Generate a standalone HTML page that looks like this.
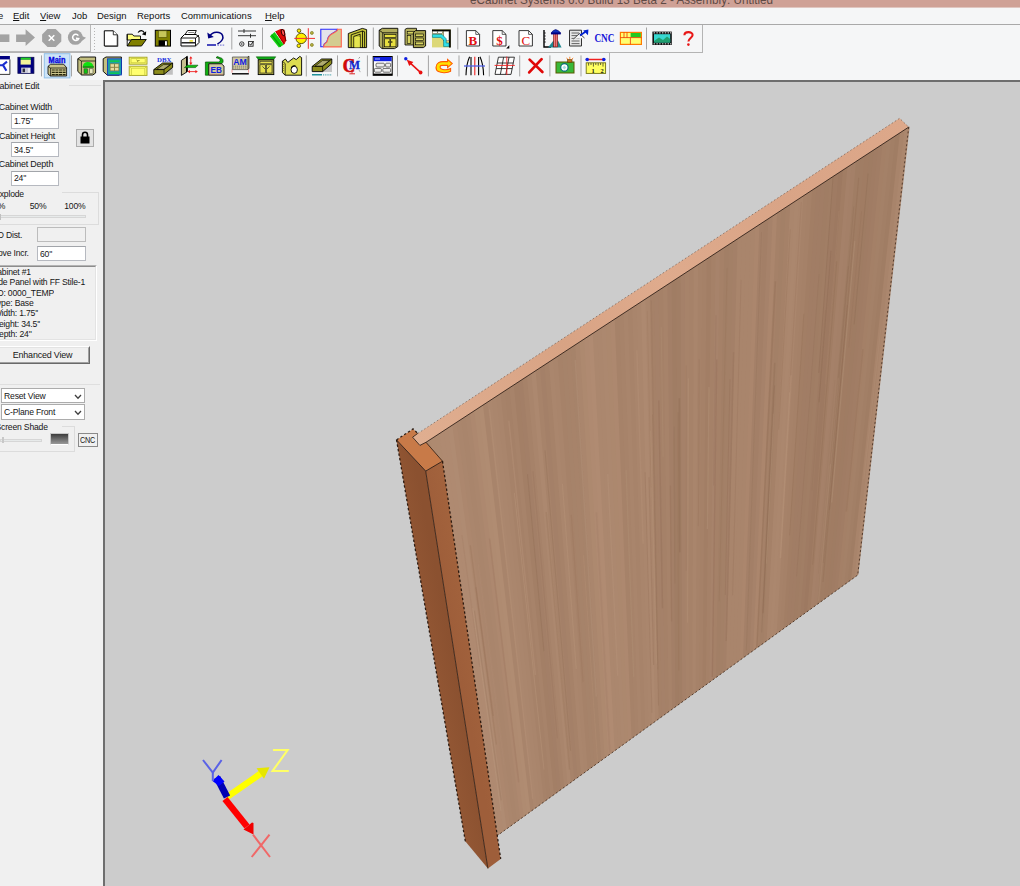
<!DOCTYPE html>
<html>
<head>
<meta charset="utf-8">
<title>eCabinet Systems</title>
<style>
html,body{margin:0;padding:0;}
body{width:1020px;height:886px;overflow:hidden;background:#f0f0f0;font-family:"Liberation Sans",sans-serif;font-size:11px;color:#000;position:relative;}
.abs{position:absolute;}
#title{left:0;top:0;width:1020px;height:8px;background:linear-gradient(#cfa196 0,#cfa196 7px,#e0c6c0 7px,#e0c6c0 8px);overflow:hidden;}
#title span{position:absolute;left:470px;top:-6.2px;font-size:12.5px;line-height:12px;color:#5e4a45;white-space:nowrap;transform:scaleX(0.934);transform-origin:left center;}
#menubar{left:0;top:8px;width:1020px;height:16px;background:#f5f6f7;border-bottom:1px solid #a9a9a9;}
#menubar span{position:absolute;top:1.7px;font-size:9.3px;line-height:12px;color:#111;white-space:nowrap;transform:scaleX(1.02);transform-origin:left center;}
#menubar u{text-decoration:underline;}
#tb{left:0;top:25px;width:1020px;height:55px;background:#f5f6f7;}
#tb1line{left:0;top:52px;width:703px;height:1px;background:#b4b4b4;}
#tb1end{left:702px;top:25px;width:1px;height:28px;background:#b4b4b4;}
#tb2end{left:609px;top:53px;width:1px;height:27px;background:#b4b4b4;}
.sep{position:absolute;width:1px;background:#9d9d9d;}
#left{left:0;top:80px;width:103px;height:806px;background:#f0f0f0;}
#view{left:103px;top:80px;width:917px;height:806px;background:#cccccc;border-left:2px solid #6e6e6e;border-top:2px solid #6e6e6e;box-sizing:border-box;}
#scene{left:0;top:0;width:1020px;height:886px;}
.lbl{position:absolute;font-size:10.5px;white-space:nowrap;color:#000;letter-spacing:-0.2px;}
.inp{position:absolute;background:#fff;border:1px solid #abadb3;box-sizing:border-box;font-size:10.5px;line-height:13px;padding-left:2px;white-space:nowrap;}
</style>
</head>
<body>
<div id="title" class="abs"><span>eCabinet Systems 6.0 Build 13 Beta 2 - Assembly: Untitled</span></div>
<div id="menubar" class="abs">
<span style="left:-2px">e</span>
<span style="left:13px"><u>E</u>dit</span>
<span style="left:40px"><u>V</u>iew</span>
<span style="left:72px">Job</span>
<span style="left:97px">Design</span>
<span style="left:137px">Reports</span>
<span style="left:181px">Communications</span>
<span style="left:265px"><u>H</u>elp</span>
</div>
<div id="tb" class="abs"></div>
<div id="tb1line" class="abs"></div>
<div id="tb1end" class="abs"></div>
<div id="tb2end" class="abs"></div>
<svg class="abs" style="left:0;top:0" width="1020" height="82" viewBox="0 0 1020 82">
<!-- toolbar1 left gray nav section -->
<rect x="0" y="25" width="91" height="27" fill="#f0f0f0"/>
<rect x="0" y="51" width="91" height="1" fill="#b9b9b9"/>
<rect x="90" y="25" width="1" height="27" fill="#b9b9b9"/>
<g fill="#a3a3a3">
<rect x="0" y="34.4" width="9.4" height="7.6"/>
<polygon points="16.1,34.4 25.6,34.4 25.6,29.2 35,37.6 25.6,46 25.6,42 16.1,42"/>
<polygon points="47.5,29 55.7,29 61.3,34.4 61.3,41.6 55.7,47 47.5,47 42.1,41.6 42.1,34.4"/>
<circle cx="75.3" cy="37.4" r="7.4"/>
<polygon points="80.5,35.6 86,37.8 80,42.5"/>
</g>
<g stroke="#fff" stroke-width="1.5" fill="none">
<path d="M48.7 35.2 L54.3 40.8 M54.3 35.2 L48.7 40.8"/>
<path d="M78.3 35.6 A3.1 3.1 0 1 0 78.6 38.6 L76 38.4" stroke-width="1.6"/>
</g>
<!-- grip -->
<g fill="#b5b5b5"><rect x="94" y="28" width="1" height="1"/><rect x="94" y="31" width="1" height="1"/><rect x="94" y="34" width="1" height="1"/><rect x="94" y="37" width="1" height="1"/><rect x="94" y="40" width="1" height="1"/><rect x="94" y="43" width="1" height="1"/><rect x="94" y="46" width="1" height="1"/><rect x="94" y="49" width="1" height="1"/></g>
<!-- new doc -->
<path d="M104.3 30.8 H113.3 L117.3 34.8 V46 H104.3 Z" fill="#fff" stroke="#000" stroke-width="1"/>
<path d="M113.3 30.8 V34.8 H117.3" fill="#fff" stroke="#000" stroke-width="0.8"/>
<path d="M117.8 35.5 V46.5 H105" fill="none" stroke="#444" stroke-width="0.9"/>
<!-- open folder -->
<path d="M127.2 34.2 H132.3 L133.8 36 H140.5 V40 H127.2 Z" fill="#ffff80" stroke="#000" stroke-width="0.9"/>
<path d="M127.2 46 L131.5 39.5 H146.3 L141.5 46 Z" fill="#808000" stroke="#000" stroke-width="0.9"/>
<path d="M127.2 34.2 V46" stroke="#000" stroke-width="0.9"/>
<path d="M138 32.5 C140 30 143 30 144.3 32.8" fill="none" stroke="#000" stroke-width="1.1"/>
<polygon points="146.2,31.2 145.8,35.5 141.8,34.2" fill="#000"/>
<!-- floppy -->
<rect x="155.3" y="30.3" width="15.2" height="15.8" fill="#808000" stroke="#000" stroke-width="1"/>
<rect x="158.3" y="30.8" width="8.6" height="6.6" fill="#c6c65a"/>
<rect x="158.3" y="30.8" width="8.6" height="6.6" fill="none" stroke="#4b4b00" stroke-width="0.6"/>
<rect x="158.6" y="40.3" width="9" height="5.6" fill="#000"/>
<rect x="165" y="41.2" width="1.9" height="4.2" fill="#fff"/>
<!-- printer -->
<path d="M185 34.5 L187.7 30.5 H196.3 L194.6 34.5 Z" fill="#fff" stroke="#000" stroke-width="0.9"/>
<path d="M188.3 32.5 H194.3" stroke="#555" stroke-width="0.7"/>
<path d="M181 38 L184.5 34.5 H196 L199 37 V42.5 L195.5 46 H181 Z" fill="#fff" stroke="#000" stroke-width="1"/>
<path d="M181 38 H195.5 L199 35.2 M195.5 38 V46" fill="none" stroke="#000" stroke-width="0.9"/>
<path d="M181.5 42.8 H195" stroke="#000" stroke-width="1.3"/>
<rect x="189.5" y="40.3" width="3.4" height="1.3" fill="#e6d800"/>
<path d="M181.8 46.6 H195.5 L199.3 43" fill="none" stroke="#777" stroke-width="0.8"/>
<!-- undo -->
<path d="M209.8 36.2 C212.5 31.2 220.6 31 222.6 35.6 C223.8 38.6 221 42 217.4 44.2" fill="none" stroke="#000080" stroke-width="1.5"/>
<polygon points="207.3,32.6 208.2,38.6 213.8,37" fill="#000080"/>
<rect x="207" y="44.2" width="9" height="1.6" fill="#2020b0"/>
<rect x="217.4" y="44.6" width="1.6" height="1" fill="#6a6ad0"/><rect x="220" y="44.6" width="1.6" height="1" fill="#6a6ad0"/><rect x="222.6" y="44.6" width="1.6" height="1" fill="#6a6ad0"/>
<!-- sep -->
<rect x="231.3" y="27.5" width="1" height="22" fill="#a5a5a5"/>
<!-- sliders/options -->
<g stroke="#222" stroke-width="0.9" fill="none">
<path d="M238 31 H256 M244 29 V33"/>
<path d="M238 35.7 H256 M250.5 33.8 V37.8"/>
<circle cx="241.8" cy="44" r="2.2"/>
<rect x="248.5" y="41.6" width="4.6" height="4.6"/>
<path d="M249.3 43.6 L250.6 45.2 L253.6 41.2" stroke-width="1"/>
</g>
<circle cx="241.8" cy="44" r="0.8" fill="#222"/>
<rect x="262" y="27.5" width="1" height="22" fill="#a5a5a5"/>
<!-- red/green books -->
<polygon points="275.6,31.2 280.5,29 284.6,29.8 286.2,40.8 283.8,45 " fill="#e00808"/>
<polygon points="269.9,36.2 274.6,32 283.8,44.8 278.9,47.4" fill="#10d010"/>
<path d="M271.6 34.6 L280.8 46.6" stroke="#08a008" stroke-width="1.2"/>
<path d="M275.6 31.4 L284.4 43.8" stroke="#a00000" stroke-width="1"/>
<ellipse cx="283" cy="32.6" rx="1.5" ry="3.2" transform="rotate(-18 283 32.6)" fill="#ff5050" stroke="#300000" stroke-width="1"/>
<path d="M284.6 35.6 L286 41" stroke="#600000" stroke-width="0.9"/>
<!-- yellow circle crosshair -->
<circle cx="301.2" cy="38.4" r="5.2" fill="#ffee00" stroke="#4a4400" stroke-width="0.9"/>
<circle cx="299" cy="30.7" r="1.8" fill="#ffee00" stroke="#4a4400" stroke-width="0.8"/>
<circle cx="298.8" cy="45.8" r="1.8" fill="#ffee00" stroke="#4a4400" stroke-width="0.8"/>
<path d="M294.3 38.4 H315 M308.3 28.2 V48.8" stroke="#f03030" stroke-width="1"/>
<circle cx="311.9" cy="32.9" r="1.5" fill="#b8b040" stroke="#707010" stroke-width="0.6"/>
<circle cx="311.9" cy="44.9" r="1.5" fill="#b8b040" stroke="#707010" stroke-width="0.6"/>
<!-- profile -->
<path d="M320.8 29.2 H337.2 V30.2 C335.6 31.6 334.4 32.4 333.4 32.8 L330.4 34.6 C329.2 35.6 328.4 36.6 328 37.8 L326.8 41.8 L324.2 44 L323.4 46.8 H320.8 Z" fill="#e4e4ea" stroke="#2828ff" stroke-width="1.1"/>
<path d="M337.4 29.2 H341.3 V46.9 H323.6 L324.4 44.2 L327 42 L328.2 38 C328.6 36.8 329.4 35.8 330.6 34.8 L333.6 33 C334.6 32.6 335.8 31.8 337.4 30.4 Z" fill="#d4cc90" stroke="#ff6450" stroke-width="1.1"/>
<!-- door frame -->
<path d="M348.3 33.5 L362.3 28.4 L366.6 29.6 V47.6 H348.3 Z" fill="#c8c83c" stroke="#000" stroke-width="0.9"/>
<path d="M351.2 47.6 V34.8 L362.5 31 V47.6 M353.8 47.6 V36.4 L360.2 34.2 V47.6 M362.5 31 L364.6 31.8 V47.6" fill="none" stroke="#000" stroke-width="0.8"/>
<rect x="354.4" y="37" width="5.4" height="10.4" fill="#e6e650"/>
<rect x="372.8" y="27.5" width="1" height="22" fill="#a5a5a5"/>
<!-- cabinet 1 -->
<path d="M379.2 30.2 L382.4 28.3 H397.8 V46.6 L394.6 48.6 H382 L379.2 46 Z" fill="#b0ac5c" stroke="#000" stroke-width="0.9"/>
<path d="M379.2 30.2 L382.8 32.8 H397.8 M382.8 32.8 V48.4" fill="none" stroke="#000" stroke-width="0.8"/>
<rect x="384.6" y="34.6" width="11.4" height="3" fill="#e8e040" stroke="#000" stroke-width="0.6"/>
<rect x="384.6" y="38.8" width="5.3" height="8" fill="#e8e040" stroke="#000" stroke-width="0.6"/>
<rect x="390.7" y="38.8" width="5.3" height="8" fill="#e8e040" stroke="#000" stroke-width="0.6"/>
<path d="M388.8 41 V43 M391.8 41 V43" stroke="#000" stroke-width="0.8"/>
<!-- cabinet 2 -->
<path d="M405 29.4 L407 28.3 H416.5 V45 H405 Z" fill="#b4b060" stroke="#000" stroke-width="0.8"/>
<rect x="407.2" y="31.4" width="7" height="2.6" fill="#d8d460" stroke="#000" stroke-width="0.6"/>
<rect x="407.2" y="35.4" width="3.6" height="8" fill="#d8d460" stroke="#000" stroke-width="0.6"/>
<path d="M413.4 32.6 L415.6 30.6 H425.6 V46 L423.4 47.6 H413.4 Z" fill="#a8a450" stroke="#000" stroke-width="0.9"/>
<rect x="415.6" y="34" width="8" height="2.6" fill="#d8d460" stroke="#000" stroke-width="0.6"/>
<rect x="415.6" y="38" width="8" height="2.6" fill="#d8d460" stroke="#000" stroke-width="0.6"/>
<rect x="415.6" y="42" width="8" height="2.8" fill="#d8d460" stroke="#000" stroke-width="0.6"/>
<!-- countertop -->
<rect x="432" y="29.4" width="18.8" height="18" fill="#dcd878"/>
<path d="M432 29.4 H450.8 V47.4 H449 V31.2 H432 Z" fill="#000"/>
<rect x="432.6" y="31.2" width="4.6" height="2.4" fill="#fff" stroke="#444" stroke-width="0.5"/>
<rect x="437.8" y="31.2" width="4.6" height="2.4" fill="#fff" stroke="#444" stroke-width="0.5"/>
<rect x="443.6" y="31.2" width="5.4" height="9.6" fill="#fff" stroke="#444" stroke-width="0.5"/>
<path d="M432.4 34.4 H442 L446.2 38.8 V43 H449 V46.6 H443.6 V40 L440.6 37.4 H432.4 Z" fill="#30e0e8" stroke="#007080" stroke-width="0.6"/>
<rect x="457.3" y="27.5" width="1" height="22" fill="#a5a5a5"/>
<!-- doc B -->
<path d="M466.4 30.6 H475.8 L479.6 34.4 V46 H466.4 Z" fill="#fff" stroke="#222" stroke-width="0.9"/>
<path d="M475.8 30.6 V34.4 H479.6" fill="none" stroke="#222" stroke-width="0.7"/>
<text x="472.9" y="44.6" font-family="Liberation Serif" font-weight="bold" font-size="13" fill="#e01010" text-anchor="middle">B</text>
<!-- doc $ -->
<path d="M492.8 30.6 H502.2 L506 34.4 V46 H492.8 Z" fill="#fff" stroke="#222" stroke-width="0.9"/>
<path d="M502.2 30.6 V34.4 H506" fill="none" stroke="#222" stroke-width="0.7"/>
<text x="499.4" y="44.6" font-family="Liberation Serif" font-weight="bold" font-size="13" fill="#e01010" text-anchor="middle">$</text>
<polygon points="509.3,45.2 509.3,48.4 506.2,48.4" fill="#000"/>
<!-- doc C -->
<path d="M519 30.6 H528.6 L532.4 34.4 V46 H519 Z" fill="#fff" stroke="#222" stroke-width="0.9"/>
<path d="M528.6 30.6 V34.4 H532.4" fill="none" stroke="#222" stroke-width="0.7"/>
<text x="525.8" y="44.6" font-family="Liberation Serif" font-size="13" fill="#e01010" text-anchor="middle">C</text>
<!-- ruler/column -->
<path d="M544 30 V47 H551" fill="none" stroke="#000" stroke-width="1.4"/>
<path d="M544 33 H546 M544 36 H546 M544 39 H546 M544 42 H546" stroke="#000" stroke-width="0.6"/>
<polygon points="548,47.6 553.5,40.5 558,40.5 561.6,47.6" fill="#208890"/>
<rect x="553.6" y="33.5" width="4" height="13.4" fill="#e88080" stroke="#800000" stroke-width="0.6"/>
<path d="M555.6 33.5 V47" stroke="#b02020" stroke-width="0.7"/>
<path d="M551.2 33.2 C552 31 554 30.2 555.6 29.6 C557.4 30.2 559.6 31 560.6 33.2 Z" fill="#1030c0" stroke="#000060" stroke-width="0.6"/>
<rect x="551" y="32.6" width="9.8" height="1.8" fill="#000080"/>
<!-- doc arrow -->
<path d="M569.5 30.2 H581.5 V46 H569.5 Z" fill="#e6e6e6" stroke="#333" stroke-width="1"/>
<path d="M571.5 33 H579 M571.5 35.6 H577 M571.5 38.4 H579.5 M571.5 41 H579.5 M571.5 43.6 H579.5" stroke="#555" stroke-width="0.9"/>
<path d="M573.5 39 L579.5 33.5 L584.5 38" fill="#f4f4f4" stroke="#333" stroke-width="0.9"/>
<path d="M580 35.4 L585.4 31.8" stroke="#0020d0" stroke-width="1.8"/>
<polygon points="588.4,29.4 588,35.2 583.2,30.6" fill="#0020d0"/>
<!-- CNC -->
<text x="604.4" y="42.4" font-family="Liberation Serif" font-weight="bold" font-size="11.5" fill="#1414d8" text-anchor="middle" textLength="20" lengthAdjust="spacingAndGlyphs">CNC</text>
<!-- layout -->
<rect x="620.4" y="32.4" width="21" height="12" fill="#ffff70" stroke="#ff7a00" stroke-width="1.2"/>
<rect x="630.6" y="33" width="10.2" height="4.4" fill="#20c820"/>
<path d="M620.4 37.6 H641.4 M630.4 37.6 V44.4 M624 32.4 V37.6 M627 32.4 V37.6" stroke="#f03000" stroke-width="0.8" fill="none"/>
<rect x="646" y="27.5" width="1" height="22" fill="#a5a5a5"/>
<!-- film -->
<rect x="652.4" y="31.6" width="19.4" height="13.4" fill="#111"/>
<rect x="654" y="34.2" width="16.2" height="8.2" fill="#38d8d0"/>
<path d="M654 41 L659 37.4 L663 40 L667 36.6 L670.2 39 V42.4 H654 Z" fill="#20a070"/>
<g fill="#ddd"><rect x="653.6" y="32.3" width="1.4" height="1.1"/><rect x="656.4" y="32.3" width="1.4" height="1.1"/><rect x="659.2" y="32.3" width="1.4" height="1.1"/><rect x="662" y="32.3" width="1.4" height="1.1"/><rect x="664.8" y="32.3" width="1.4" height="1.1"/><rect x="667.6" y="32.3" width="1.4" height="1.1"/><rect x="670" y="32.3" width="1.2" height="1.1"/>
<rect x="653.6" y="43.3" width="1.4" height="1.1"/><rect x="656.4" y="43.3" width="1.4" height="1.1"/><rect x="659.2" y="43.3" width="1.4" height="1.1"/><rect x="662" y="43.3" width="1.4" height="1.1"/><rect x="664.8" y="43.3" width="1.4" height="1.1"/><rect x="667.6" y="43.3" width="1.4" height="1.1"/><rect x="670" y="43.3" width="1.2" height="1.1"/></g>
<!-- question -->
<path d="M684.4 35.2 C684.4 31.2 692.6 31 692.6 35 C692.6 37.8 688.4 38.2 688.4 41.6" fill="none" stroke="#e81818" stroke-width="2.1"/>
<circle cx="688.4" cy="44.6" r="1.3" fill="#e81818"/>
<!-- TB2: blue K window icon -->
<rect x="-3" y="56.2" width="12.8" height="18" fill="#fff"/>
<rect x="-3" y="56" width="12.9" height="3.4" fill="#000080"/>
<path d="M7 61.6 L2.9 64.9 L6.4 70.8 M2.9 65.2 H-3" fill="none" stroke="#1a2fd0" stroke-width="2.1"/>
<path d="M9.9 59.4 V74.4 H-3" fill="none" stroke="#222" stroke-width="0.9"/>
<!-- blue floppy -->
<rect x="17.9" y="57.3" width="16" height="16" fill="#000080" stroke="#0a0a50" stroke-width="0.8"/>
<rect x="20.6" y="57.6" width="10.2" height="2.2" fill="#20d020"/>
<rect x="20.6" y="59.8" width="10.2" height="4.8" fill="#f2f29a"/>
<rect x="21.2" y="67.6" width="9.4" height="5.4" fill="#c8c8d8"/>
<rect x="22.6" y="68.6" width="2.4" height="3.6" fill="#303040"/>
<rect x="28.4" y="68.2" width="1.2" height="4.4" fill="#fff"/>
<rect x="41" y="55.4" width="1" height="21" fill="#a5a5a5"/>
<!-- Main selected -->
<rect x="44.3" y="53.7" width="25.6" height="24.2" fill="#cde4f7" stroke="#92c0e8" stroke-width="1"/>
<text x="57" y="62.6" font-family="Liberation Sans" font-weight="bold" font-size="9.5" fill="#0404dc" stroke="#0404dc" stroke-width="0.35" text-anchor="middle" textLength="16.8" lengthAdjust="spacingAndGlyphs">Main</text>
<path d="M48 66.4 L50.6 64.2 H63.6 L66.6 67.6 V76 H50.4 L48 74 Z" fill="#cac48c" stroke="#000" stroke-width="0.8"/>
<path d="M48 66.4 L50.6 68 H66.6 M50.6 68 V76" fill="none" stroke="#000" stroke-width="0.7"/>
<path d="M51.8 70 H65.6 M51.8 72.4 H65.6 M51.8 74.6 H65.6" stroke="#26260a" stroke-width="1.1" stroke-dasharray="3 0.6"/>
<rect x="71" y="55.4" width="1" height="21" fill="#a5a5a5"/>
<!-- cabinet green -->
<path d="M77.8 58.8 L80.6 57 H95.6 V73 L92.8 75 H81.6 L77.8 71.4 Z" fill="#c4c080" stroke="#000" stroke-width="0.9"/>
<path d="M77.8 58.8 L81.4 61 H95.6 M81.4 61 V74.8" fill="none" stroke="#000" stroke-width="0.7"/>
<path d="M82.8 66.4 C83.4 63 85.4 62 88 62 C90.6 62 92.8 63.4 93.6 66.4 Z" fill="#10e010"/>
<rect x="82.8" y="66.2" width="11" height="1.6" fill="#0a8a0a"/>
<rect x="84" y="68.8" width="3.6" height="4.8" fill="#10c010" stroke="#333" stroke-width="0.5"/>
<rect x="89.4" y="68.8" width="3.6" height="4.8" fill="#e8e8c0" stroke="#333" stroke-width="0.5"/>
<!-- cabinet teal -->
<path d="M103.2 58.8 L106 57 H121.4 V73.6 L119 75.2 H107.4 L103.2 71.4 Z" fill="#c4c080" stroke="#000" stroke-width="0.9"/>
<rect x="107.4" y="58.8" width="14" height="16.2" fill="#18a0a8" stroke="#1030c0" stroke-width="0.8"/>
<rect x="109.6" y="60.4" width="9.8" height="1.6" fill="#10c850"/>
<rect x="109.6" y="72.4" width="9.8" height="1.6" fill="#10c850"/>
<rect x="109.8" y="63.4" width="9.4" height="7.8" fill="#8a8448"/>
<rect x="110.6" y="64.2" width="3.4" height="2.6" fill="#e6dca0"/><rect x="115" y="64.2" width="3.4" height="2.6" fill="#e6dca0"/>
<rect x="110.6" y="67.8" width="3.4" height="2.6" fill="#e6dca0"/><rect x="115" y="67.8" width="3.4" height="2.6" fill="#e6dca0"/>
<!-- yellow drawer/door -->
<rect x="129.2" y="57.2" width="17.8" height="7" fill="#ffff70" stroke="#a0a020" stroke-width="0.9"/>
<rect x="131" y="58.6" width="14.2" height="4.2" fill="none" stroke="#c8c83c" stroke-width="0.8"/>
<path d="M136.6 60 L138 61.4 L139.4 60" fill="none" stroke="#505000" stroke-width="0.8"/>
<rect x="129.2" y="66.2" width="17.8" height="9.2" fill="#ffff70" stroke="#a0a020" stroke-width="0.9"/>
<path d="M129.2 66.2 L131.4 68.2 H144.8 L147 66.2 M131.4 68.2 V75.4 M144.8 68.2 V75.4" fill="none" stroke="#c8c83c" stroke-width="0.8"/>
<!-- DBX -->
<text x="164.2" y="61.8" font-family="Liberation Serif" font-weight="bold" font-size="6.4" fill="#2030e0" text-anchor="middle" textLength="14.4" lengthAdjust="spacingAndGlyphs">DBX</text>
<polygon points="160,74.8 172.8,66 172.8,74.8" fill="#c0c0c0"/>
<path d="M153.8 69.6 L162.6 63 H172.6 V67.4 L164 74.4 H153.8 Z" fill="#8c8c1c" stroke="#000" stroke-width="0.9"/>
<path d="M156.6 69.4 L163.4 64.6 H170.4 L163.6 69.4 Z" fill="#b0ac70" stroke="#000" stroke-width="0.6"/>
<path d="M153.8 69.6 H164 L172.6 63 M164 69.6 V74.4" fill="none" stroke="#000" stroke-width="0.7"/>
<!-- edge icon -->
<path d="M181.4 60.4 L187.4 56.4 V71.6 L181.4 75.4 Z" fill="#c8c090" stroke="#000" stroke-width="0.9"/>
<path d="M186.6 56.6 V72" stroke="#000" stroke-width="1.2"/>
<polygon points="184.4,67.6 187.4,65.2 198,65.2 195.6,67.6" fill="#10c010" stroke="#055005" stroke-width="0.6"/>
<path d="M190.8 57.4 V64.2 M188.4 71.6 H196.8" stroke="#f02020" stroke-width="0.9"/>
<polygon points="190.8,56.2 189.2,58.6 192.4,58.6" fill="#f02020"/><polygon points="190.8,65 189.2,62.6 192.4,62.6" fill="#f02020"/>
<polygon points="187.6,71.6 190,70 190,73.2" fill="#f02020"/><polygon points="197.8,71.6 195.4,70 195.4,73.2" fill="#f02020"/>
<!-- EB -->
<path d="M205.4 75.2 V62 H219 C220.4 61.4 220.6 59.6 219.2 58.8 L216 57.6 L217.4 56.6 L222 58.4 C223.6 60 223.4 62.2 222 63.6 H208.6 V75.2 Z" fill="#10b010" stroke="#045004" stroke-width="0.7"/>
<path d="M208.8 63.8 H221.4 L224 66 V75.2 H208.8 Z" fill="#d0c8a0" stroke="#000" stroke-width="0.8"/>
<text x="216.2" y="73.2" font-family="Liberation Sans" font-weight="bold" font-size="8.6" fill="#1020e0" text-anchor="middle" textLength="11.4" lengthAdjust="spacingAndGlyphs">EB</text>
<path d="M209.6 74.4 H222.6" stroke="#c04040" stroke-width="0.6" stroke-dasharray="1 1"/>
<!-- AM -->
<path d="M232.4 57 H247.4 V69.6 H232.4 Z" fill="#d0c8a0" stroke="#444" stroke-width="0.7"/>
<path d="M247.4 57 L249 56.2 V68.6 L247.4 69.6" fill="#a09870" stroke="#000" stroke-width="0.6"/>
<path d="M233 66.2 H247 M233 68 H247" stroke="#555" stroke-width="0.6" stroke-dasharray="1.2 0.8"/>
<text x="240" y="65" font-family="Liberation Sans" font-weight="bold" font-size="8.8" fill="#1020e0" text-anchor="middle" textLength="13.6" lengthAdjust="spacingAndGlyphs">AM</text>
<path d="M232 69.6 V73.2 M248.6 69.6 V73.2" stroke="#f03030" stroke-width="0.8" stroke-dasharray="1 0.8"/>
<path d="M232 73.8 H248.8" stroke="#000" stroke-width="1.4"/>
<!-- cabinet green top -->
<polygon points="256.2,56.8 275.8,56.8 273.6,59.6 258.4,59.6" fill="#10a818" stroke="#045004" stroke-width="0.5"/>
<rect x="258.2" y="59.8" width="15.6" height="14.8" fill="#aca840" stroke="#000" stroke-width="0.9"/>
<rect x="260" y="61.4" width="12" height="2.2" fill="#e8e050" stroke="#222" stroke-width="0.5"/>
<rect x="260" y="64.8" width="5.4" height="8.2" fill="#e8e050" stroke="#222" stroke-width="0.6"/>
<rect x="266.6" y="64.8" width="5.4" height="8.2" fill="#e8e050" stroke="#222" stroke-width="0.6"/>
<path d="M262.4 66.4 L265 69 M269.6 66.4 L267 69" stroke="#222" stroke-width="0.7"/>
<!-- tall yellow w/ hole -->
<path d="M282.4 61.2 L285.4 59 L287.8 62.4 L293.6 58 L296.2 59.6 L299.8 56.4 L301.6 57.6 V75.2 H285.2 L282.4 72.6 Z" fill="#dcdc50" stroke="#000" stroke-width="0.9"/>
<path d="M282.4 61.2 L285.2 63.6 V75.2" fill="none" stroke="#000" stroke-width="0.7"/>
<path d="M283.4 64 V72" stroke="#8a8a20" stroke-width="0.9" stroke-dasharray="1 1"/>
<ellipse cx="294.2" cy="69.8" rx="3.2" ry="3.6" fill="#fff" stroke="#000" stroke-width="0.9"/>
<path d="M291.4 68 C292 65.8 294 65.4 295.6 66" fill="none" stroke="#000" stroke-width="1.2"/>
<rect x="305.8" y="55.4" width="1" height="21" fill="#a5a5a5"/>
<!-- tray -->
<polygon points="319,72 332,62 332,72" fill="#c4c4c4"/>
<path d="M312.2 66.4 L321.6 59 H331.8 V63.6 L322.6 71.6 H312.2 Z" fill="#8c8c1c" stroke="#000" stroke-width="0.9"/>
<path d="M315 66.2 L322.4 60.6 H329.6 L322.2 66.2 Z" fill="#b0ac70" stroke="#000" stroke-width="0.6"/>
<path d="M312.2 66.4 H322.6 L331.8 59 M322.6 66.4 V71.6" fill="none" stroke="#000" stroke-width="0.7"/>
<rect x="312" y="74" width="10" height="1.5" fill="#209098"/>
<path d="M323 74.8 H332" stroke="#50a8b0" stroke-width="1.2" stroke-dasharray="1 0.8"/>
<rect x="337" y="55.4" width="1" height="21" fill="#a5a5a5"/>
<!-- CM -->
<text x="349" y="71.8" font-family="Liberation Serif" font-weight="bold" font-size="19.5" fill="#d00808" stroke="#d00808" stroke-width="0.7" text-anchor="middle" textLength="12.4" lengthAdjust="spacingAndGlyphs">C</text>
<text x="354.6" y="69.4" font-family="Liberation Serif" font-weight="bold" font-size="12" fill="#1028d0" stroke="#1028d0" stroke-width="0.3" text-anchor="middle" textLength="11" lengthAdjust="spacingAndGlyphs">M</text>
<path d="M352 70 V73.4 M349.4 73.8 H355" stroke="#d81010" stroke-width="0.9"/>
<path d="M358.6 58.4 L360 57.2 M358.8 70.4 L360.4 71.6" stroke="#666" stroke-width="0.7"/>
<rect x="366.9" y="55.4" width="1" height="21" fill="#a5a5a5"/>
<!-- window grid -->
<rect x="373.2" y="56.5" width="19" height="18.8" fill="#fff" stroke="#000" stroke-width="1"/>
<rect x="373.7" y="57" width="18" height="4.2" fill="#1020e0"/>
<path d="M375 59 H380" stroke="#b0c0ff" stroke-width="1"/>
<rect x="376" y="63.2" width="8.4" height="3.8" rx="1" fill="#eee" stroke="#333" stroke-width="0.7"/>
<rect x="385.6" y="63.2" width="5" height="3.8" rx="1" fill="#eee" stroke="#333" stroke-width="0.7"/>
<rect x="374.4" y="68.4" width="7" height="3.8" rx="1" fill="#eee" stroke="#333" stroke-width="0.7"/>
<rect x="382.8" y="68.4" width="7.8" height="3.8" rx="1" fill="#eee" stroke="#333" stroke-width="0.7"/>
<path d="M373.2 74.4 H392.2" stroke="#000" stroke-width="1.6"/>
<rect x="397" y="55.4" width="1" height="21" fill="#a5a5a5"/>
<!-- arrow dots -->
<path d="M420.4 72.4 L408.4 61.4" stroke="#e81010" stroke-width="1.5"/>
<polygon points="406.8,59.8 413.4,62 409.2,66" fill="#e81010"/>
<circle cx="405.8" cy="58.8" r="1.7" fill="#1020e0"/>
<circle cx="420.6" cy="72.5" r="1.9" fill="#e81010"/>
<rect x="427.9" y="55.4" width="1" height="21" fill="#a5a5a5"/>
<!-- orange loop arrow -->
<path d="M443 61.6 H447.6 V59.4 L452.2 63.6 L447.6 67.6 V65.4 H442 C439.4 65.4 439.4 68.6 442 69.2 C445 70 448.4 69.8 450.6 68.6 V71.2 C447.6 73 441.6 73.2 438.4 71.6 C435.2 70 435.2 64.6 438.6 62.6 C440 61.8 441.4 61.6 443 61.6 Z" fill="#ffe000" stroke="#ff5a00" stroke-width="1.1"/>
<rect x="458.5" y="55.4" width="1" height="21" fill="#a5a5a5"/>
<!-- grid lines -->
<path d="M469.6 56.8 C467.2 62 466.2 68 466 75.2 M480 56.8 C482.4 62 483.4 68 483.6 75.2 M471 57 V75.2 M478.6 57 V75.2" fill="none" stroke="#000" stroke-width="1.1"/>
<path d="M474.8 56.8 V75.2" stroke="#f02020" stroke-width="1.1"/>
<path d="M464 66 H485" stroke="#5060e8" stroke-width="1.3"/>
<rect x="488.8" y="55.4" width="1" height="21" fill="#a5a5a5"/>
<!-- skewed grid with red -->
<g stroke="#222" stroke-width="0.9" fill="#fff">
<polygon points="498.4,57.2 514.4,57.2 511,74.4 495,74.4"/>
<path d="M497.2 63 H513.2 M496.2 68.6 H512.2 M503.6 57.2 L500.4 74.4 M509 57.2 L505.8 74.4" fill="none"/>
</g>
<path d="M506.8 56.6 V75 M494.6 65.4 H514.8" stroke="#f02020" stroke-width="0.9"/>
<rect x="519.2" y="55.4" width="1" height="21" fill="#a5a5a5"/>
<!-- red X -->
<path d="M529.6 59.6 L542.4 72 M541.6 59.2 L529.2 72.4" stroke="#e00808" stroke-width="2.7" stroke-linecap="round"/>
<rect x="549.4" y="55.4" width="1" height="21" fill="#a5a5a5"/>
<!-- camera -->
<rect x="556" y="62" width="18" height="11" fill="#38b838" stroke="#5a5a00" stroke-width="1"/>
<rect x="567.6" y="59.6" width="4.4" height="2.6" fill="#c07018" stroke="#5a3000" stroke-width="0.6"/>
<path d="M566.4 58 L568 59.4 M569.8 56.8 V58.8 M573.2 58 L571.6 59.4" stroke="#ff7a10" stroke-width="0.9"/>
<circle cx="564.4" cy="67.4" r="3.7" fill="#fff" stroke="#0a7078" stroke-width="1.2"/>
<rect x="563" y="66" width="2.8" height="2.8" fill="#a8e0e0" transform="rotate(45 564.4 67.4)"/>
<rect x="580.5" y="55.4" width="1" height="21" fill="#a5a5a5"/>
<!-- ruler -->
<path d="M587 59.5 H604" stroke="#f02020" stroke-width="1.5"/>
<circle cx="587.2" cy="59.5" r="1.8" fill="#1020e0"/><circle cx="603.8" cy="59.5" r="1.8" fill="#1020e0"/>
<rect x="586.2" y="62.8" width="19.4" height="10.6" fill="#ffff60" stroke="#707010" stroke-width="0.9"/>
<path d="M588.6 63 V65.6 M591 63 V65 M593.4 63 V66.6 M595.8 63 V65 M598.2 63 V65.6 M600.6 63 V65 M603 63 V66.6" stroke="#222" stroke-width="0.7"/>
<text x="593.2" y="72.6" font-family="Liberation Serif" font-weight="bold" font-size="6.4" fill="#111" text-anchor="middle">1</text>
<text x="602" y="72.6" font-family="Liberation Serif" font-weight="bold" font-size="6.4" fill="#111" text-anchor="middle">2</text>
</svg>
<div id="left" class="abs">
<div class="abs" style="left:69.0px;top:4.5px;width:31.5px;height:1.0px;box-sizing:border-box;background:#dcdcdc;"></div>
<span class="lbl" style="right:63.5px;top:0.3px;font-size:9.5px;line-height:12px;transform:scaleX(0.935);transform-origin:right center;color:#161616">Cabinet Edit</span>
<span class="lbl" style="right:50.6px;top:21.3px;font-size:9.5px;line-height:12px;transform:scaleX(0.935);transform-origin:right center;color:#161616">Cabinet Width</span>
<div class="abs" style="left:11.3px;top:33.4px;width:47.7px;height:15.2px;box-sizing:border-box;background:#fff;border:1px solid #b6b9c0;border-top-color:#a2a5aa;"></div>
<span class="lbl" style="left:14.3px;top:35.3px;font-size:9.5px;line-height:12px;transform:scaleX(0.905);transform-origin:left center;color:#161616">1.75''</span>
<span class="lbl" style="right:48.0px;top:49.5px;font-size:9.5px;line-height:12px;transform:scaleX(0.935);transform-origin:right center;color:#161616">Cabinet Height</span>
<div class="abs" style="left:11.3px;top:61.6px;width:47.7px;height:15.4px;box-sizing:border-box;background:#fff;border:1px solid #b6b9c0;border-top-color:#a2a5aa;"></div>
<span class="lbl" style="left:14.3px;top:63.6px;font-size:9.5px;line-height:12px;transform:scaleX(0.905);transform-origin:left center;color:#161616">34.5''</span>
<span class="lbl" style="right:49.5px;top:78.2px;font-size:9.5px;line-height:12px;transform:scaleX(0.935);transform-origin:right center;color:#161616">Cabinet Depth</span>
<div class="abs" style="left:11.3px;top:90.5px;width:47.7px;height:15.2px;box-sizing:border-box;background:#fff;border:1px solid #b6b9c0;border-top-color:#a2a5aa;"></div>
<span class="lbl" style="left:14.3px;top:92.4px;font-size:9.5px;line-height:12px;transform:scaleX(0.905);transform-origin:left center;color:#161616">24''</span>
<div class="abs" style="left:76.3px;top:48.5px;width:17.5px;height:18.3px;box-sizing:border-box;background:#e3e3e3;border:1px solid #adadad;"></div>
<svg class="abs" style="left:80px;top:51.3px" width="10" height="13" viewBox="0 0 10 13"><rect x="0.5" y="5.5" width="9" height="7" fill="#000"/><path d="M2.5 6 V3.8 a2.5 2.6 0 0 1 5 0 V6" fill="none" stroke="#000" stroke-width="1.6"/></svg>
<div class="abs" style="left:62.0px;top:112.0px;width:36.0px;height:1.0px;box-sizing:border-box;background:#dcdcdc;"></div>
<div class="abs" style="left:97.5px;top:112.0px;width:1.0px;height:32.5px;box-sizing:border-box;background:#dcdcdc;"></div>
<div class="abs" style="left:0.0px;top:143.5px;width:98.5px;height:1.0px;box-sizing:border-box;background:#dcdcdc;"></div>
<span class="lbl" style="right:79.3px;top:108.2px;font-size:9.5px;line-height:12px;transform:scaleX(0.905);transform-origin:right center;color:#161616">Explode</span>
<span class="lbl" style="right:97.4px;top:119.5px;font-size:9.5px;line-height:12px;transform:scaleX(0.905);transform-origin:right center;color:#161616">0%</span>
<span class="lbl" style="right:56.7px;top:119.5px;font-size:9.5px;line-height:12px;transform:scaleX(0.905);transform-origin:right center;color:#161616">50%</span>
<span class="lbl" style="right:17.2px;top:119.5px;font-size:9.5px;line-height:12px;transform:scaleX(0.905);transform-origin:right center;color:#161616">100%</span>
<div class="abs" style="left:0.0px;top:135.3px;width:86.0px;height:3.0px;box-sizing:border-box;background:#e7eaea;border:1px solid #d6d6d6;"></div>
<div class="abs" style="left:0.0px;top:133.6px;width:1.2px;height:6.2px;box-sizing:border-box;background:#c0c0c0;"></div>
<span class="lbl" style="right:80.4px;top:148.8px;font-size:9.5px;line-height:12px;transform:scaleX(0.905);transform-origin:right center;color:#161616">3D Dist.</span>
<div class="abs" style="left:37.2px;top:146.7px;width:48.6px;height:15.3px;box-sizing:border-box;background:#f0f0f0;border:1px solid #bcbcbc;"></div>
<span class="lbl" style="right:74.1px;top:167.3px;font-size:9.5px;line-height:12px;transform:scaleX(0.905);transform-origin:right center;color:#161616">Move Incr.</span>
<div class="abs" style="left:37.2px;top:165.9px;width:48.6px;height:15.6px;box-sizing:border-box;background:#fff;border:1px solid #b6b9c0;border-top-color:#a2a5aa;"></div>
<span class="lbl" style="left:40.2px;top:168.0px;font-size:9.5px;line-height:12px;transform:scaleX(0.905);transform-origin:left center;color:#161616">60''</span>
<div class="abs" style="left:-2.0px;top:185.2px;width:98.8px;height:75.8px;box-sizing:border-box;border:1px solid #b4b4b4;border-right-color:#fff;border-bottom-color:#fff;background:#f0f0f0;"></div>
<div class="abs" style="left:-2.0px;top:186.2px;width:97.8px;height:73.8px;box-sizing:border-box;border:1px solid #8c8c8c;border-right-color:#e3e3e3;border-bottom-color:#e3e3e3;"></div>
<span class="lbl" style="right:72.5px;top:185.9px;font-size:9.5px;line-height:12px;transform:scaleX(0.905);transform-origin:right center;color:#161616">Cabinet #1</span>
<span class="lbl" style="right:18.3px;top:196.3px;font-size:9.5px;line-height:12px;transform:scaleX(0.905);transform-origin:right center;color:#161616">Side Panel with FF Stile-1</span>
<span class="lbl" style="right:49.5px;top:206.6px;font-size:9.5px;line-height:12px;transform:scaleX(0.905);transform-origin:right center;color:#161616">ID: 0000_TEMP</span>
<span class="lbl" style="right:69.6px;top:217.0px;font-size:9.5px;line-height:12px;transform:scaleX(0.905);transform-origin:right center;color:#161616">Type: Base</span>
<span class="lbl" style="right:65.0px;top:227.3px;font-size:9.5px;line-height:12px;transform:scaleX(0.905);transform-origin:right center;color:#161616">Width: 1.75''</span>
<span class="lbl" style="right:63.0px;top:237.7px;font-size:9.5px;line-height:12px;transform:scaleX(0.905);transform-origin:right center;color:#161616">Height: 34.5''</span>
<span class="lbl" style="right:71.4px;top:248.0px;font-size:9.5px;line-height:12px;transform:scaleX(0.905);transform-origin:right center;color:#161616">Depth: 24''</span>
<div class="abs" style="left:-2.0px;top:266.0px;width:92.3px;height:17.6px;box-sizing:border-box;border:1px solid #fff;border-right-color:#696969;border-bottom-color:#696969;background:#f0f0f0;"></div>
<div class="abs" style="left:-2.0px;top:267.0px;width:91.3px;height:15.6px;box-sizing:border-box;border:1px solid #e3e3e3;border-right-color:#a0a0a0;border-bottom-color:#a0a0a0;"></div>
<span class="lbl" style="right:30.8px;top:268.6px;font-size:9.5px;line-height:12px;transform:scaleX(0.94);transform-origin:right center;color:#161616">Enhanced View</span>
<div class="abs" style="left:0.0px;top:304.0px;width:100.0px;height:1.0px;box-sizing:border-box;background:#dfdfdf;"></div>
<div class="abs" style="left:1.1px;top:307.7px;width:83.6px;height:15.8px;box-sizing:border-box;background:#fff;border:1px solid #acacac;"></div>
<span class="lbl" style="left:4.1px;top:309.8px;font-size:9.5px;line-height:12px;transform:scaleX(0.905);transform-origin:left center;color:#161616">Reset View</span>
<svg class="abs" style="left:73.7px;top:313.6px" width="8" height="6" viewBox="0 0 8 6"><path d="M1 1 L4 4.2 L7 1" fill="none" stroke="#404040" stroke-width="1.3"/></svg>
<div class="abs" style="left:1.1px;top:324.0px;width:83.6px;height:16.2px;box-sizing:border-box;background:#fff;border:1px solid #acacac;"></div>
<span class="lbl" style="left:4.1px;top:326.3px;font-size:9.5px;line-height:12px;transform:scaleX(0.905);transform-origin:left center;color:#161616">C-Plane Front</span>
<svg class="abs" style="left:73.7px;top:330.1px" width="8" height="6" viewBox="0 0 8 6"><path d="M1 1 L4 4.2 L7 1" fill="none" stroke="#404040" stroke-width="1.3"/></svg>
<div class="abs" style="left:62.0px;top:345.5px;width:12.0px;height:1.0px;box-sizing:border-box;background:#dcdcdc;"></div>
<div class="abs" style="left:73.5px;top:345.5px;width:1.0px;height:26.5px;box-sizing:border-box;background:#dcdcdc;"></div>
<div class="abs" style="left:0.0px;top:371.0px;width:74.5px;height:1.0px;box-sizing:border-box;background:#dcdcdc;"></div>
<span class="lbl" style="right:55.0px;top:340.6px;font-size:9.5px;line-height:12px;transform:scaleX(0.905);transform-origin:right center;color:#161616">Screen Shade</span>
<div class="abs" style="left:0.0px;top:358.5px;width:42.0px;height:3.0px;box-sizing:border-box;background:#e7eaea;border:1px solid #d6d6d6;"></div>
<div class="abs" style="left:2.0px;top:356.6px;width:1.6px;height:6.0px;box-sizing:border-box;background:#c8c8c8;"></div>
<div class="abs" style="left:50.1px;top:352.9px;width:18.5px;height:12.6px;box-sizing:border-box;background:linear-gradient(#3c3c3c,#9a9a9a);border:1px solid #c8c8c8;border-bottom-color:#fff;"></div>
<div class="abs" style="left:78.3px;top:352.7px;width:20.0px;height:14.3px;box-sizing:border-box;background:#f0f0f0;border:1px solid #8a8a8a;"></div>
<span class="lbl" style="left:79.8px;top:354.0px;font-size:9.5px;line-height:12px;transform:scaleX(0.76);transform-origin:left center;color:#161616">CNC</span>

</div>
<div id="view" class="abs"></div>
<svg id="scene" class="abs" width="1020" height="886" viewBox="0 0 1020 886">
<defs>
<linearGradient id="gPanel" gradientUnits="userSpaceOnUse" x1="440" y1="600" x2="880" y2="400">
<stop offset="0" stop-color="#a58370"/>
<stop offset="0.12" stop-color="#ac8973"/>
<stop offset="0.22" stop-color="#a7846e"/>
<stop offset="0.33" stop-color="#b08c75"/>
<stop offset="0.42" stop-color="#a9866f"/>
<stop offset="0.52" stop-color="#b18d76"/>
<stop offset="0.60" stop-color="#a8856e"/>
<stop offset="0.70" stop-color="#ae8a73"/>
<stop offset="0.80" stop-color="#a6836c"/>
<stop offset="0.90" stop-color="#ab8770"/>
<stop offset="1" stop-color="#a4816b"/>
</linearGradient>
<linearGradient id="gStrip" gradientUnits="userSpaceOnUse" x1="420" y1="440" x2="905" y2="122">
<stop offset="0" stop-color="#e0ae90"/>
<stop offset="0.3" stop-color="#d8a384"/>
<stop offset="0.5" stop-color="#dfab8d"/>
<stop offset="0.75" stop-color="#d9a486"/>
<stop offset="1" stop-color="#dda88a"/>
</linearGradient>
<linearGradient id="gStileL" gradientUnits="userSpaceOnUse" x1="400" y1="650" x2="450" y2="640">
<stop offset="0" stop-color="#9a5c38"/>
<stop offset="0.5" stop-color="#935734"/>
<stop offset="1" stop-color="#8b5130"/>
</linearGradient>
<linearGradient id="gStileR" gradientUnits="userSpaceOnUse" x1="455" y1="650" x2="480" y2="645">
<stop offset="0" stop-color="#9e5e3a"/>
<stop offset="1" stop-color="#a3633d"/>
</linearGradient>
</defs>
<!-- panel front -->
<polygon points="426,442.3 908.7,127.1 857.7,575.1 497.5,835.5 442.5,461.2" fill="#a9856c"/>
<!-- stripes -->
<g>
<polygon points="426.0,442.3 431.4,438.8 490.6,840.5 486.5,843.5" fill="#ad896f"/>
<polygon points="430.4,439.4 435.7,435.9 494.0,838.1 489.9,841.1" fill="#ae8a70"/>
<polygon points="434.8,436.6 440.1,433.1 497.4,835.6 493.2,838.6" fill="#ae8a70"/>
<polygon points="439.2,433.7 444.5,430.2 500.7,833.2 496.6,836.2" fill="#af8a71"/>
<polygon points="443.6,430.8 448.9,427.3 504.1,830.8 500.0,833.7" fill="#af8a71"/>
<polygon points="447.9,428.0 453.3,424.5 507.5,828.3 503.4,831.3" fill="#af8b72"/>
<polygon points="452.3,425.1 457.7,421.6 510.9,825.9 506.7,828.9" fill="#ac876e"/>
<polygon points="456.7,422.2 462.1,418.7 514.2,823.4 510.1,826.4" fill="#aa866d"/>
<polygon points="461.1,419.4 466.5,415.9 517.6,821.0 513.5,824.0" fill="#a9856c"/>
<polygon points="465.5,416.5 470.8,413.0 521.0,818.6 516.9,821.5" fill="#aa866d"/>
<polygon points="469.9,413.6 475.2,410.1 524.4,816.1 520.2,819.1" fill="#ad886f"/>
<polygon points="474.3,410.8 479.6,407.3 527.7,813.7 523.6,816.7" fill="#af8b71"/>
<polygon points="478.7,407.9 484.0,404.4 531.1,811.2 527.0,814.2" fill="#b08c72"/>
<polygon points="483.0,405.0 488.4,401.6 534.5,808.8 530.4,811.8" fill="#a8846b"/>
<polygon points="487.4,402.2 492.8,398.7 537.9,806.4 533.7,809.3" fill="#ab876e"/>
<polygon points="491.8,399.3 497.2,395.8 541.2,803.9 537.1,806.9" fill="#aa866d"/>
<polygon points="496.2,396.5 501.6,393.0 544.6,801.5 540.5,804.5" fill="#a9856c"/>
<polygon points="500.6,393.6 506.0,390.1 548.0,799.0 543.9,802.0" fill="#a68269"/>
<polygon points="505.0,390.7 510.3,387.2 551.4,796.6 547.2,799.6" fill="#a58168"/>
<polygon points="509.4,387.9 514.7,384.4 554.7,794.2 550.6,797.1" fill="#a7836a"/>
<polygon points="513.8,385.0 519.1,381.5 558.1,791.7 554.0,794.7" fill="#a37f66"/>
<polygon points="518.2,382.1 523.5,378.6 561.5,789.3 557.4,792.3" fill="#a37f67"/>
<polygon points="522.5,379.3 527.9,375.8 564.9,786.8 560.7,789.8" fill="#a68269"/>
<polygon points="526.9,376.4 532.3,372.9 568.2,784.4 564.1,787.4" fill="#a9856c"/>
<polygon points="531.3,373.5 536.7,370.0 571.6,782.0 567.5,784.9" fill="#ac886f"/>
<polygon points="535.7,370.7 541.1,367.2 575.0,779.5 570.9,782.5" fill="#a7836a"/>
<polygon points="540.1,367.8 545.4,364.3 578.4,777.1 574.2,780.1" fill="#a48068"/>
<polygon points="544.5,364.9 549.8,361.4 581.7,774.6 577.6,777.6" fill="#a68269"/>
<polygon points="548.9,362.1 554.2,358.6 585.1,772.2 581.0,775.2" fill="#aa866d"/>
<polygon points="553.3,359.2 558.6,355.7 588.5,769.8 584.4,772.7" fill="#a9856c"/>
<polygon points="557.6,356.3 563.0,352.8 591.9,767.3 587.7,770.3" fill="#a68269"/>
<polygon points="562.0,353.5 567.4,350.0 595.2,764.9 591.1,767.9" fill="#a6836a"/>
<polygon points="566.4,350.6 571.8,347.1 598.6,762.4 594.5,765.4" fill="#a7836a"/>
<polygon points="570.8,347.7 576.2,344.2 602.0,760.0 597.9,763.0" fill="#a6836a"/>
<polygon points="575.2,344.9 580.6,341.4 605.4,757.6 601.2,760.5" fill="#aa866d"/>
<polygon points="579.6,342.0 584.9,338.5 608.7,755.1 604.6,758.1" fill="#ad896f"/>
<polygon points="584.0,339.1 589.3,335.6 612.1,752.7 608.0,755.7" fill="#af8a71"/>
<polygon points="588.4,336.3 593.7,332.8 615.5,750.2 611.4,753.2" fill="#b08b72"/>
<polygon points="592.8,333.4 598.1,329.9 618.8,747.8 614.7,750.8" fill="#ab876e"/>
<polygon points="597.1,330.5 602.5,327.1 622.2,745.4 618.1,748.3" fill="#ab876e"/>
<polygon points="601.5,327.7 606.9,324.2 625.6,742.9 621.5,745.9" fill="#ac886f"/>
<polygon points="605.9,324.8 611.3,321.3 629.0,740.5 624.9,743.5" fill="#ac886e"/>
<polygon points="610.3,322.0 615.7,318.5 632.3,738.0 628.2,741.0" fill="#ad886f"/>
<polygon points="614.7,319.1 620.0,315.6 635.7,735.6 631.6,738.6" fill="#a68269"/>
<polygon points="619.1,316.2 624.4,312.7 639.1,733.2 635.0,736.1" fill="#a7836a"/>
<polygon points="623.5,313.4 628.8,309.9 642.5,730.7 638.4,733.7" fill="#a9856c"/>
<polygon points="627.9,310.5 633.2,307.0 645.8,728.3 641.7,731.3" fill="#a7836a"/>
<polygon points="632.2,307.6 637.6,304.1 649.2,725.8 645.1,728.8" fill="#a9856c"/>
<polygon points="636.6,304.8 642.0,301.3 652.6,723.4 648.5,726.4" fill="#aa866d"/>
<polygon points="641.0,301.9 646.4,298.4 656.0,721.0 651.9,723.9" fill="#ad8970"/>
<polygon points="645.4,299.0 650.8,295.5 659.3,718.5 655.2,721.5" fill="#aa866d"/>
<polygon points="649.8,296.2 655.2,292.7 662.7,716.1 658.6,719.1" fill="#a58168"/>
<polygon points="654.2,293.3 659.5,289.8 666.1,713.6 662.0,716.6" fill="#a58169"/>
<polygon points="658.6,290.4 663.9,286.9 669.5,711.2 665.4,714.2" fill="#a58168"/>
<polygon points="663.0,287.6 668.3,284.1 672.8,708.8 668.7,711.7" fill="#a7836a"/>
<polygon points="667.4,284.7 672.7,281.2 676.2,706.3 672.1,709.3" fill="#a37f67"/>
<polygon points="671.7,281.8 677.1,278.3 679.6,703.9 675.5,706.9" fill="#a07d64"/>
<polygon points="676.1,279.0 681.5,275.5 683.0,701.4 678.8,704.4" fill="#a17e65"/>
<polygon points="680.5,276.1 685.9,272.6 686.3,699.0 682.2,702.0" fill="#a58169"/>
<polygon points="684.9,273.2 690.3,269.7 689.7,696.6 685.6,699.5" fill="#a7836a"/>
<polygon points="689.3,270.4 694.6,266.9 693.1,694.1 689.0,697.1" fill="#a68269"/>
<polygon points="693.7,267.5 699.0,264.0 696.5,691.7 692.3,694.7" fill="#a9856c"/>
<polygon points="698.1,264.6 703.4,261.1 699.8,689.2 695.7,692.2" fill="#a68269"/>
<polygon points="702.5,261.8 707.8,258.3 703.2,686.8 699.1,689.8" fill="#a58168"/>
<polygon points="706.8,258.9 712.2,255.4 706.6,684.4 702.5,687.3" fill="#a27e65"/>
<polygon points="711.2,256.0 716.6,252.5 710.0,681.9 705.8,684.9" fill="#a58168"/>
<polygon points="715.6,253.2 721.0,249.7 713.3,679.5 709.2,682.5" fill="#a7836b"/>
<polygon points="720.0,250.3 725.4,246.8 716.7,677.0 712.6,680.0" fill="#a58168"/>
<polygon points="724.4,247.4 729.7,244.0 720.1,674.6 716.0,677.6" fill="#a27f66"/>
<polygon points="728.8,244.6 734.1,241.1 723.5,672.2 719.3,675.1" fill="#a38067"/>
<polygon points="733.2,241.7 738.5,238.2 726.8,669.7 722.7,672.7" fill="#a48068"/>
<polygon points="737.6,238.9 742.9,235.4 730.2,667.3 726.1,670.3" fill="#a9856c"/>
<polygon points="741.9,236.0 747.3,232.5 733.6,664.8 729.5,667.8" fill="#a9856c"/>
<polygon points="746.3,233.1 751.7,229.6 737.0,662.4 732.8,665.4" fill="#a9856c"/>
<polygon points="750.7,230.3 756.1,226.8 740.3,660.0 736.2,662.9" fill="#a9856c"/>
<polygon points="755.1,227.4 760.5,223.9 743.7,657.5 739.6,660.5" fill="#ab866d"/>
<polygon points="759.5,224.5 764.9,221.0 747.1,655.1 743.0,658.1" fill="#a48068"/>
<polygon points="763.9,221.7 769.2,218.2 750.5,652.6 746.3,655.6" fill="#a37f67"/>
<polygon points="768.3,218.8 773.6,215.3 753.8,650.2 749.7,653.2" fill="#a6826a"/>
<polygon points="772.7,215.9 778.0,212.4 757.2,647.8 753.1,650.7" fill="#ab866d"/>
<polygon points="777.1,213.1 782.4,209.6 760.6,645.3 756.5,648.3" fill="#a58168"/>
<polygon points="781.4,210.2 786.8,206.7 764.0,642.9 759.8,645.9" fill="#a38067"/>
<polygon points="785.8,207.3 791.2,203.8 767.3,640.4 763.2,643.4" fill="#a58168"/>
<polygon points="790.2,204.5 795.6,201.0 770.7,638.0 766.6,641.0" fill="#aa866d"/>
<polygon points="794.6,201.6 800.0,198.1 774.1,635.6 770.0,638.5" fill="#ab876e"/>
<polygon points="799.0,198.7 804.3,195.2 777.5,633.1 773.3,636.1" fill="#aa866d"/>
<polygon points="803.4,195.9 808.7,192.4 780.8,630.7 776.7,633.7" fill="#a68269"/>
<polygon points="807.8,193.0 813.1,189.5 784.2,628.2 780.1,631.2" fill="#a58168"/>
<polygon points="812.2,190.1 817.5,186.6 787.6,625.8 783.5,628.8" fill="#a27e65"/>
<polygon points="816.5,187.3 821.9,183.8 791.0,623.4 786.8,626.3" fill="#a17d65"/>
<polygon points="820.9,184.4 826.3,180.9 794.3,620.9 790.2,623.9" fill="#a17d65"/>
<polygon points="825.3,181.5 830.7,178.0 797.7,618.5 793.6,621.5" fill="#a07d64"/>
<polygon points="829.7,178.7 835.1,175.2 801.1,616.0 797.0,619.0" fill="#a17e65"/>
<polygon points="834.1,175.8 839.5,172.3 804.4,613.6 800.3,616.6" fill="#9f7b63"/>
<polygon points="838.5,172.9 843.8,169.5 807.8,611.2 803.7,614.1" fill="#9d7961"/>
<polygon points="842.9,170.1 848.2,166.6 811.2,608.7 807.1,611.7" fill="#a17d64"/>
<polygon points="847.3,167.2 852.6,163.7 814.6,606.3 810.5,609.3" fill="#a58169"/>
<polygon points="851.7,164.4 857.0,160.9 817.9,603.8 813.8,606.8" fill="#a48068"/>
<polygon points="856.0,161.5 861.4,158.0 821.3,601.4 817.2,604.4" fill="#a07d64"/>
<polygon points="860.4,158.6 865.8,155.1 824.7,599.0 820.6,601.9" fill="#a07d64"/>
<polygon points="864.8,155.8 870.2,152.3 828.1,596.5 824.0,599.5" fill="#a07c63"/>
<polygon points="869.2,152.9 874.6,149.4 831.4,594.1 827.3,597.1" fill="#9f7c63"/>
<polygon points="873.6,150.0 878.9,146.5 834.8,591.6 830.7,594.6" fill="#a07c64"/>
<polygon points="878.0,147.2 883.3,143.7 838.2,589.2 834.1,592.2" fill="#a17d65"/>
<polygon points="882.4,144.3 887.7,140.8 841.6,586.8 837.5,589.7" fill="#a48067"/>
<polygon points="886.8,141.4 892.1,137.9 844.9,584.3 840.8,587.3" fill="#a48168"/>
<polygon points="891.1,138.6 896.5,135.1 848.3,581.9 844.2,584.9" fill="#a27f66"/>
<polygon points="895.5,135.7 900.9,132.2 851.7,579.4 847.6,582.4" fill="#a07d64"/>
<polygon points="899.9,132.8 905.3,129.3 855.1,577.0 851.0,580.0" fill="#a8846b"/>
<polygon points="904.3,130.0 909.7,126.5 858.4,574.6 854.3,577.5" fill="#ab876e"/>
</g>
<g fill="none" stroke-linecap="butt">
<line x1="652.5" y1="414.4" x2="658.5" y2="705.5" stroke="#6b4630" stroke-opacity="0.12" stroke-width="0.8"/>
<line x1="678.1" y1="412.3" x2="678.8" y2="670.4" stroke="#6b4630" stroke-opacity="0.07" stroke-width="1.4"/>
<line x1="761.5" y1="232.1" x2="746.3" y2="650.5" stroke="#6b4630" stroke-opacity="0.12" stroke-width="0.8"/>
<line x1="461.9" y1="535.0" x2="479.7" y2="666.7" stroke="#6b4630" stroke-opacity="0.06" stroke-width="1.1"/>
<line x1="649.0" y1="477.3" x2="653.6" y2="665.1" stroke="#6b4630" stroke-opacity="0.13" stroke-width="1.1"/>
<line x1="583.5" y1="555.4" x2="597.7" y2="762.7" stroke="#d8b89c" stroke-opacity="0.11" stroke-width="0.8"/>
<line x1="575.3" y1="360.0" x2="596.3" y2="696.6" stroke="#d8b89c" stroke-opacity="0.12" stroke-width="1.6"/>
<line x1="833.1" y1="176.6" x2="818.7" y2="373.0" stroke="#6b4630" stroke-opacity="0.16" stroke-width="1.0"/>
<line x1="489.6" y1="538.6" x2="518.8" y2="782.4" stroke="#6b4630" stroke-opacity="0.09" stroke-width="1.6"/>
<line x1="790.3" y1="229.3" x2="778.7" y2="429.6" stroke="#6b4630" stroke-opacity="0.14" stroke-width="0.8"/>
<line x1="699.2" y1="359.2" x2="698.4" y2="526.2" stroke="#6b4630" stroke-opacity="0.12" stroke-width="0.7"/>
<line x1="636.9" y1="350.3" x2="643.1" y2="543.8" stroke="#d8b89c" stroke-opacity="0.11" stroke-width="1.5"/>
<line x1="545.0" y1="450.3" x2="570.6" y2="750.7" stroke="#6b4630" stroke-opacity="0.16" stroke-width="0.8"/>
<line x1="571.3" y1="514.9" x2="583.0" y2="682.1" stroke="#6b4630" stroke-opacity="0.07" stroke-width="1.2"/>
<line x1="562.4" y1="483.7" x2="576.3" y2="669.1" stroke="#d8b89c" stroke-opacity="0.13" stroke-width="1.2"/>
<line x1="838.9" y1="210.9" x2="825.3" y2="384.5" stroke="#d8b89c" stroke-opacity="0.10" stroke-width="0.8"/>
<line x1="773.4" y1="413.6" x2="766.3" y2="563.7" stroke="#d8b89c" stroke-opacity="0.14" stroke-width="1.0"/>
<line x1="489.5" y1="409.3" x2="532.7" y2="798.9" stroke="#d8b89c" stroke-opacity="0.11" stroke-width="1.4"/>
<line x1="716.0" y1="315.3" x2="713.6" y2="485.6" stroke="#6b4630" stroke-opacity="0.08" stroke-width="1.2"/>
<line x1="825.4" y1="310.1" x2="811.9" y2="490.5" stroke="#6b4630" stroke-opacity="0.06" stroke-width="0.9"/>
<line x1="647.3" y1="310.8" x2="651.1" y2="487.6" stroke="#6b4630" stroke-opacity="0.07" stroke-width="1.0"/>
<line x1="834.9" y1="380.1" x2="818.4" y2="573.7" stroke="#6b4630" stroke-opacity="0.07" stroke-width="0.6"/>
<line x1="474.5" y1="610.6" x2="501.2" y2="800.4" stroke="#6b4630" stroke-opacity="0.12" stroke-width="1.1"/>
<line x1="775.4" y1="281.4" x2="756.7" y2="648.0" stroke="#6b4630" stroke-opacity="0.13" stroke-width="1.5"/>
<line x1="774.8" y1="362.8" x2="763.0" y2="613.3" stroke="#6b4630" stroke-opacity="0.13" stroke-width="1.5"/>
<line x1="836.8" y1="261.2" x2="812.7" y2="564.8" stroke="#6b4630" stroke-opacity="0.12" stroke-width="1.0"/>
<line x1="709.0" y1="387.0" x2="707.4" y2="529.1" stroke="#d8b89c" stroke-opacity="0.17" stroke-width="1.3"/>
<line x1="626.1" y1="469.7" x2="633.7" y2="676.9" stroke="#d8b89c" stroke-opacity="0.09" stroke-width="1.4"/>
<line x1="470.3" y1="545.4" x2="496.4" y2="744.5" stroke="#6b4630" stroke-opacity="0.11" stroke-width="1.2"/>
<line x1="861.6" y1="211.2" x2="848.8" y2="347.4" stroke="#6b4630" stroke-opacity="0.08" stroke-width="0.8"/>
<line x1="847.4" y1="304.8" x2="829.5" y2="509.9" stroke="#6b4630" stroke-opacity="0.13" stroke-width="0.8"/>
<line x1="645.1" y1="472.2" x2="652.0" y2="712.9" stroke="#6b4630" stroke-opacity="0.12" stroke-width="0.9"/>
<line x1="514.4" y1="492.9" x2="544.0" y2="769.6" stroke="#d8b89c" stroke-opacity="0.18" stroke-width="0.9"/>
<line x1="527.5" y1="474.2" x2="543.9" y2="651.1" stroke="#6b4630" stroke-opacity="0.12" stroke-width="1.1"/>
<line x1="596.4" y1="512.3" x2="609.8" y2="752.2" stroke="#6b4630" stroke-opacity="0.06" stroke-width="1.5"/>
<line x1="478.2" y1="563.7" x2="504.1" y2="765.1" stroke="#d8b89c" stroke-opacity="0.08" stroke-width="0.7"/>
<line x1="651.3" y1="300.5" x2="658.0" y2="669.2" stroke="#6b4630" stroke-opacity="0.06" stroke-width="1.2"/>
<line x1="650.6" y1="430.7" x2="656.3" y2="663.7" stroke="#d8b89c" stroke-opacity="0.15" stroke-width="0.8"/>
<line x1="661.2" y1="327.0" x2="663.1" y2="456.9" stroke="#d8b89c" stroke-opacity="0.10" stroke-width="0.9"/>
<line x1="607.8" y1="473.9" x2="617.7" y2="675.7" stroke="#d8b89c" stroke-opacity="0.12" stroke-width="1.4"/>
<line x1="858.7" y1="177.9" x2="823.0" y2="581.9" stroke="#6b4630" stroke-opacity="0.11" stroke-width="1.2"/>
<line x1="854.8" y1="240.9" x2="831.7" y2="502.5" stroke="#d8b89c" stroke-opacity="0.17" stroke-width="1.1"/>
<line x1="741.1" y1="279.9" x2="732.6" y2="595.3" stroke="#6b4630" stroke-opacity="0.13" stroke-width="0.8"/>
<line x1="838.4" y1="377.7" x2="818.6" y2="601.4" stroke="#d8b89c" stroke-opacity="0.11" stroke-width="1.5"/>
<line x1="831.0" y1="250.8" x2="819.1" y2="402.3" stroke="#6b4630" stroke-opacity="0.14" stroke-width="1.1"/>
<line x1="475.9" y1="587.4" x2="493.4" y2="716.0" stroke="#6b4630" stroke-opacity="0.09" stroke-width="1.4"/>
<line x1="508.8" y1="420.7" x2="535.4" y2="675.2" stroke="#d8b89c" stroke-opacity="0.15" stroke-width="1.5"/>
<line x1="670.4" y1="485.6" x2="671.6" y2="621.5" stroke="#6b4630" stroke-opacity="0.09" stroke-width="1.3"/>
<line x1="733.6" y1="352.2" x2="726.2" y2="641.1" stroke="#6b4630" stroke-opacity="0.10" stroke-width="1.4"/>
<line x1="853.8" y1="206.4" x2="823.3" y2="563.1" stroke="#6b4630" stroke-opacity="0.12" stroke-width="0.8"/>
<line x1="688.4" y1="378.3" x2="687.5" y2="622.7" stroke="#d8b89c" stroke-opacity="0.13" stroke-width="1.0"/>
<line x1="803.8" y1="313.8" x2="789.6" y2="535.3" stroke="#6b4630" stroke-opacity="0.11" stroke-width="1.0"/>
<line x1="862.9" y1="349.1" x2="846.4" y2="511.4" stroke="#6b4630" stroke-opacity="0.10" stroke-width="1.4"/>
<line x1="848.2" y1="266.1" x2="830.3" y2="464.2" stroke="#6b4630" stroke-opacity="0.15" stroke-width="0.7"/>
<line x1="801.3" y1="202.0" x2="789.5" y2="392.1" stroke="#6b4630" stroke-opacity="0.09" stroke-width="1.0"/>
<line x1="727.1" y1="267.9" x2="719.2" y2="601.4" stroke="#6b4630" stroke-opacity="0.09" stroke-width="0.8"/>
<line x1="686.3" y1="365.5" x2="686.3" y2="570.7" stroke="#6b4630" stroke-opacity="0.08" stroke-width="0.8"/>
<line x1="730.0" y1="379.2" x2="725.3" y2="595.0" stroke="#6b4630" stroke-opacity="0.15" stroke-width="0.8"/>
<line x1="774.6" y1="385.5" x2="761.7" y2="632.5" stroke="#6b4630" stroke-opacity="0.15" stroke-width="0.8"/>
<line x1="880.7" y1="329.6" x2="863.8" y2="479.3" stroke="#d8b89c" stroke-opacity="0.11" stroke-width="0.7"/>
<line x1="819.1" y1="274.0" x2="796.5" y2="576.5" stroke="#6b4630" stroke-opacity="0.13" stroke-width="0.6"/>
<line x1="546.2" y1="512.1" x2="569.5" y2="769.6" stroke="#6b4630" stroke-opacity="0.11" stroke-width="1.4"/>
<line x1="674.2" y1="426.8" x2="674.9" y2="583.4" stroke="#6b4630" stroke-opacity="0.06" stroke-width="1.2"/>
<line x1="679.4" y1="398.3" x2="679.8" y2="552.2" stroke="#6b4630" stroke-opacity="0.14" stroke-width="1.6"/>
<line x1="868.1" y1="173.5" x2="854.2" y2="324.4" stroke="#6b4630" stroke-opacity="0.14" stroke-width="0.9"/>
<line x1="658.8" y1="400.6" x2="662.5" y2="608.2" stroke="#6b4630" stroke-opacity="0.13" stroke-width="1.4"/>
<line x1="533.0" y1="471.3" x2="557.3" y2="738.3" stroke="#6b4630" stroke-opacity="0.08" stroke-width="1.1"/>
<line x1="472.7" y1="608.1" x2="500.9" y2="810.8" stroke="#d8b89c" stroke-opacity="0.14" stroke-width="1.0"/>
<line x1="716.8" y1="359.6" x2="712.3" y2="677.0" stroke="#6b4630" stroke-opacity="0.15" stroke-width="1.3"/>
<line x1="790.8" y1="375.3" x2="780.4" y2="558.2" stroke="#d8b89c" stroke-opacity="0.15" stroke-width="1.4"/>
</g>
<!-- panel top strip -->
<polygon points="412.6,437.2 417.8,433.4 899.6,118.3 908.7,127.1 426,442.3 419.9,445.4" fill="url(#gStrip)"/>
<!-- stile top -->
<polygon points="396.5,439.9 413,428.9 417.8,433.4 412.6,437.2 419.9,445.4 426,442.3 442.5,461.2 425.7,471.1" fill="#c87a48"/>
<!-- stile left face -->
<polygon points="396.5,439.9 425.7,471.1 487.9,868.5 465.3,841.3" fill="url(#gStileL)"/>
<!-- stile right face -->
<polygon points="425.7,471.1 442.5,461.2 500.7,858.9 487.9,868.5" fill="url(#gStileR)"/>
<!-- edges -->
<g fill="none" stroke="#2a1a12" stroke-width="1">
<polyline points="419.9,445.4 426,442.3 908.7,127.1" stroke-opacity="0.85"/>
<polyline points="396.5,439.9 425.7,471.1 442.5,461.2" stroke-opacity="0.85"/>
<polyline points="417.8,433.4 412.6,437.2 419.9,445.4" stroke-opacity="0.8"/>
<polyline points="426,442.3 442.5,461.2" stroke-opacity="0.8"/>
<line x1="425.7" y1="471.1" x2="487.9" y2="868.5" stroke-opacity="0.8"/>
<g stroke-dasharray="2.4 2.2" stroke-opacity="0.9" stroke-width="1.25" stroke="#1c0d05">
<polyline points="396.5,439.9 413,428.9 417.8,433.4"/>
<polyline points="417.8,433.4 899.6,118.3 908.7,127.1" stroke-opacity="0.4" stroke-width="0.9" stroke-dasharray="1.6 2.2"/>
<polyline points="908.7,127.1 857.7,575.1 497.5,835.5" stroke-width="1" stroke-opacity="0.62" stroke-dasharray="2 2.3"/>
<line x1="442.5" y1="461.2" x2="500.7" y2="858.9"/>
<line x1="396.5" y1="439.9" x2="465.3" y2="841.3"/>
</g>
</g>
<!-- axis gizmo -->
<g stroke-linecap="butt" fill="none">
<line x1="226.5" y1="797.4" x2="262" y2="772.7" stroke="#ffff00" stroke-width="6.5"/>
<polygon points="269.5,767.3 256.5,768.3 264,778.8" fill="#e6e600" stroke="none"/>
<line x1="225" y1="799" x2="247" y2="826.5" stroke="#ff0000" stroke-width="6.5"/>
<polygon points="253.5,834.5 243.5,829.5 252,822.5 253.5,823" fill="#f00000" stroke="none"/>
<line x1="227" y1="797" x2="217" y2="777.5" stroke="#0000b4" stroke-width="7"/>
<polygon points="212.5,781 218.5,775 224.5,781.5 219,786" fill="#0000ff" stroke="none"/>
<polyline points="203,760 212.8,772.5 221.6,760" stroke="#5a62e6" stroke-width="2"/>
<line x1="212.8" y1="772.5" x2="212.8" y2="781" stroke="#5a62e6" stroke-width="2"/>
<polyline points="273,750 287.6,750 272.6,771 288.8,771" stroke="#ffff66" stroke-width="2.1"/>
<line x1="253" y1="834.7" x2="270" y2="857" stroke="#f06868" stroke-width="2"/>
<line x1="269.5" y1="834.7" x2="251.7" y2="857" stroke="#f06868" stroke-width="2"/>
</g>

</svg>
</body>
</html>
